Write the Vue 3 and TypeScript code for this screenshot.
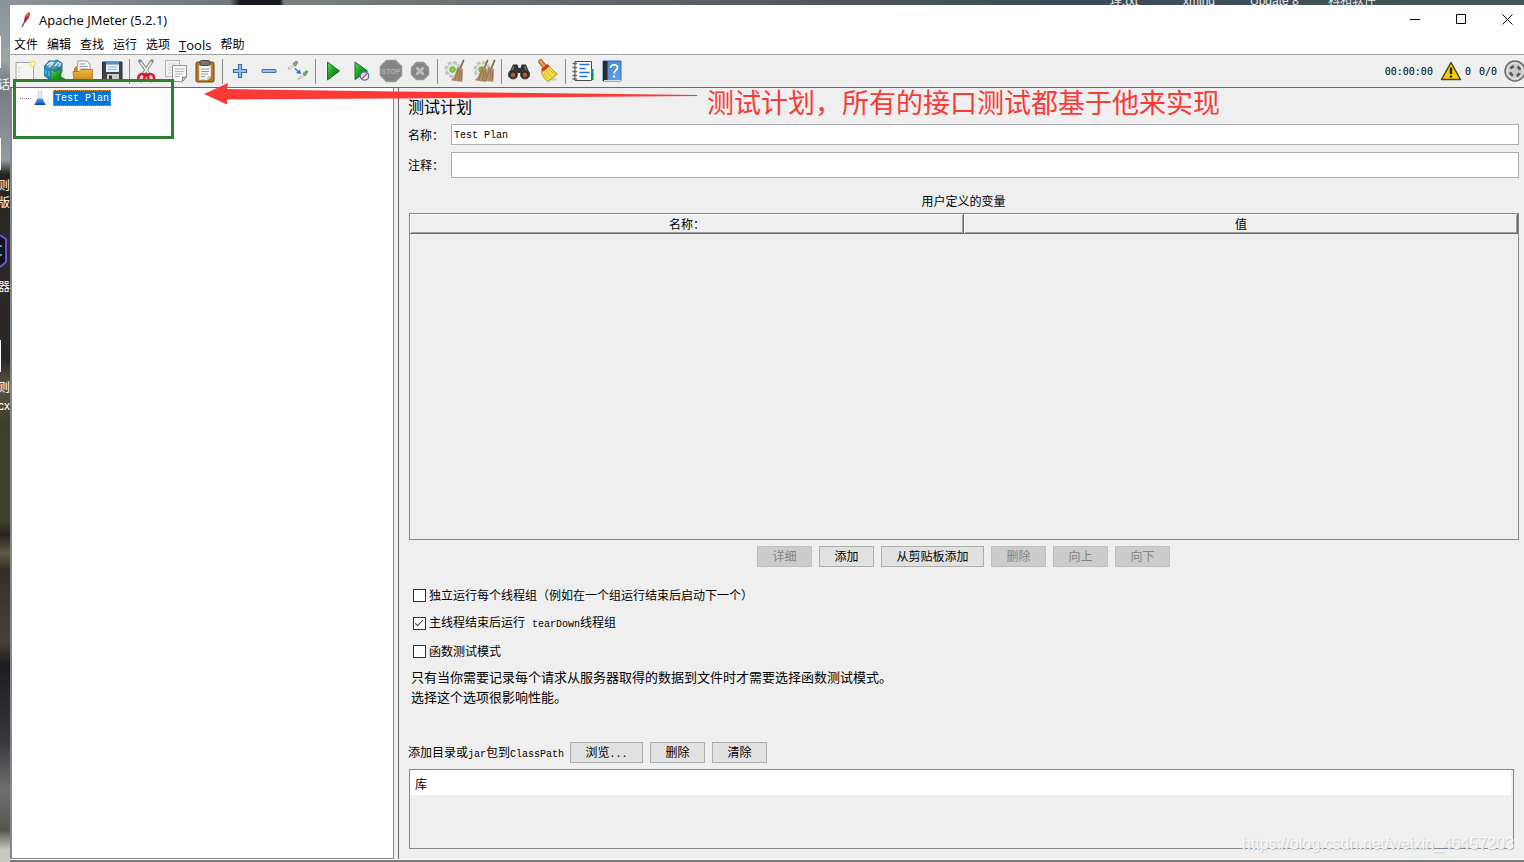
<script setup lang="ts">
import { ref } from 'vue'

interface Tool { id: string; label: string; off?: boolean }

const menus: string[] = ['文件', '编辑', '查找', '运行', '选项', 'Tools', '帮助']

const toolGroups: Tool[][] = [
  [
    { id: 'new', label: '新建' },
    { id: 'templates', label: '模板' },
    { id: 'open', label: '打开' },
    { id: 'save', label: '保存' },
  ],
  [
    { id: 'cut', label: '剪切' },
    { id: 'copy', label: '复制' },
    { id: 'paste', label: '粘贴' },
  ],
  [
    { id: 'plus', label: '展开' },
    { id: 'minus', label: '折叠' },
    { id: 'toggle', label: '切换' },
  ],
  [
    { id: 'start', label: '启动' },
    { id: 'start-now', label: '不停顿启动' },
    { id: 'stop', label: '停止', off: true },
    { id: 'shutdown', label: '关闭', off: true },
  ],
  [
    { id: 'clear', label: '清除' },
    { id: 'clear-all', label: '清除全部' },
  ],
  [
    { id: 'search', label: '查找' },
    { id: 'reset', label: '重置查找' },
  ],
  [
    { id: 'functions', label: '函数助手' },
    { id: 'help', label: '帮助' },
  ],
]

const tableButtons = [
  { text: '详细', off: true },
  { text: '添加', off: false },
  { text: '从剪贴板添加', off: false, wide: true },
  { text: '删除', off: true },
  { text: '向上', off: true },
  { text: '向下', off: true },
]

const planName = ref('Test Plan')
const comment = ref('')
const serial = ref(false)
const tearDown = ref(true)
const functional = ref(false)
</script>

<template>
  <div class="desktop">
    <svg class="defs" width="0" height="0" aria-hidden="true">
      <defs>
        <linearGradient id="gGreen" x1="0" y1="0" x2="1" y2="1">
          <stop offset="0" stop-color="#5fd75a" /><stop offset=".5" stop-color="#1c9a20" /><stop offset="1" stop-color="#0a6b10" />
        </linearGradient>
        <linearGradient id="gFolder" x1="0" y1="0" x2="0" y2="1">
          <stop offset="0" stop-color="#f0b64a" /><stop offset="1" stop-color="#c98414" />
        </linearGradient>
        <linearGradient id="gBook" x1="0" y1="0" x2="1" y2="1">
          <stop offset="0" stop-color="#4a86cf" /><stop offset="1" stop-color="#5fa0e6" />
        </linearGradient>
        <linearGradient id="gFlask" x1="0" y1="0" x2="0" y2="1">
          <stop offset="0" stop-color="#5f9be6" /><stop offset="1" stop-color="#0648b8" />
        </linearGradient>
      </defs>
      <symbol id="i-new" viewBox="0 0 24 24">
        <path d="M3 3.500h17.500v18H3z" fill="#f4f4f2" stroke="#a2a29e" />
        <path d="M5.500 9h1M5.500 13h1M5.500 17h1" stroke="#999" />
        <circle cx="19.500" cy="5" r="4" fill="#f8e97c" opacity=".6" />
        <circle cx="19.500" cy="5" r="2" fill="#fff" stroke="#eddc52" />
      </symbol>
      <symbol id="i-templates" viewBox="0 0 24 24">
        <path d="M2.500 7L7 2h6l2-1 5 3v9l-6 7-5 1-6.500-4z" fill="#4e94b5" stroke="#2f6c8c" />
        <path d="M5 6l5-3M7 8l5-5M13 7l4-4M17 8l1.500-4" fill="none" stroke="#d5edf4" stroke-width="1.500" />
        <path d="M2 8l8 3v10l-8-5z" fill="#2089bd" /><path d="M10 11l9-4v8l-9 5z" fill="#2b7ba0" />
        <path d="M4 11v4M7 12v5" stroke="#66bde0" stroke-width="1.200" />
        <path d="M9 10.500l4 2 6-2v7.500l3.500 1.500-4 1v1.500L9 22.500z" fill="url(#gGreen)" stroke="#16731a" stroke-width=".6" />
      </symbol>
      <symbol id="i-open" viewBox="0 0 24 24">
        <path d="M3 21V9l3-2h13v13z" fill="#c48320" />
        <path d="M7 2h9l3 3v8H6z" fill="#fafafa" stroke="#999" />
        <path d="M8.500 5h6M8.500 7.500h8M8.500 10h8" stroke="#999" />
        <path d="M2 12.500h6l2-2h11.500v11.500H3z" fill="url(#gFolder)" stroke="#a9700f" stroke-width=".8" />
      </symbol>
      <symbol id="i-save" viewBox="0 0 24 24">
        <path d="M2.500 3h19.500v19H3.500l-1-1z" fill="#40444a" stroke="#292c31" />
        <path d="M6 3h13v10H6z" fill="#e6eef5" /><path d="M6 3h13v2.500H6z" fill="#568cc3" />
        <path d="M8 8h9M8 10.500h9" stroke="#a8b6c4" />
        <path d="M7 15h12v7H7z" fill="#c9cdd1" /><path d="M9 16.500h3v5H9z" fill="#34383e" />
      </symbol>
      <symbol id="i-cut" viewBox="0 0 24 24">
        <path d="M5 2l8 12M17 2L9 14" stroke="#858785" stroke-width="3.500" stroke-linecap="round" />
        <path d="M5.500 3l8 11M16.500 3L9 14" stroke="#f0f0ee" stroke-width="1.500" />
        <ellipse cx="6.500" cy="18.500" rx="3" ry="3.500" fill="#f0dcdc" stroke="#d51f24" stroke-width="2.600" transform="rotate(30 6.500 18.500)" />
        <ellipse cx="16" cy="18.500" rx="3" ry="3.500" fill="#f0dcdc" stroke="#d51f24" stroke-width="2.600" transform="rotate(-30 16 18.500)" />
        <path d="M8 14.500h6.500L11.300 18z" fill="#c9191e" />
      </symbol>
      <symbol id="i-copy" viewBox="0 0 24 24">
        <path d="M1.500 1.500h14v16h-14z" fill="#f3f3f1" stroke="#b5b5b5" />
        <path d="M4 5h9M4 8h4M4 11h4M4 14h4" stroke="#cbcbcb" />
        <path d="M8.500 6.500h14V18l-4 4.500h-10z" fill="#f7f7f5" stroke="#969696" />
        <path d="M11 10h9M11 12.500h9M11 15h8M11 17.500h5" stroke="#b5b5b5" />
        <path d="M18.500 22.500V18h4z" fill="#ccc" stroke="#888" />
      </symbol>
      <symbol id="i-paste" viewBox="0 0 24 24">
        <rect x="3" y="3" width="18" height="20" rx="1.500" fill="#b97518" stroke="#74470b" />
        <path d="M6 6h12v12l-3 3H6z" fill="#f6f6f4" stroke="#a9a9a9" stroke-width=".7" />
        <path d="M8 10h8M8 12.500h8M8 15h7M8 17.500h4" stroke="#999" />
        <path d="M14.500 21v-4h3.500z" fill="#c4c4c4" />
        <rect x="7" y="1.500" width="10" height="5" rx="1.500" fill="#72756f" stroke="#484a46" />
      </symbol>
      <symbol id="i-plus" viewBox="0 0 24 24">
        <path d="M10.500 5.500h3V10.500h5v3h-5v5h-3v-5h-5v-3h5z" fill="#9cc1e9" stroke="#3b6fb4" stroke-width="1.200" />
      </symbol>
      <symbol id="i-minus" viewBox="0 0 24 24">
        <rect x="5" y="10.500" width="14" height="3" rx="1" fill="#9bbde3" stroke="#4674b2" stroke-width="1.200" />
      </symbol>
      <symbol id="i-toggle" viewBox="0 0 24 24">
        <path d="M3 9.500L8 6M13 19.500l5-3.500" stroke="#b9bbb5" stroke-width="2.600" stroke-linecap="round" />
        <path d="M3.500 9L8 6M13.500 19l4.500-3" stroke="#f2f2ee" stroke-width="1.200" />
        <path d="M7 4.500l3-2.500 2 1-1.500 3L9 7.500zM17 14.500l3.500-3 1.500 1-2 3.500-1.500 1z" fill="#76a870" stroke="#62855e" stroke-width=".6" />
        <path d="M9 9.500l4 4" stroke="#2e74cf" stroke-width="1.500" /><path d="M15 15l-5-1 4-3.500z" fill="#2e74cf" />
      </symbol>
      <symbol id="i-start" viewBox="0 0 24 24">
        <path d="M6.500 3l12 9-12 9z" fill="url(#gGreen)" stroke="#15751a" />
      </symbol>
      <symbol id="i-start-now" viewBox="0 0 24 24">
        <path d="M5 3l12.500 9L5 20.500z" fill="url(#gGreen)" stroke="#15751a" />
        <circle cx="14.500" cy="17" r="4.200" fill="#e8edf3" fill-opacity=".85" stroke="#4776b4" stroke-width="1.300" />
        <path d="M11.500 20l6-6" stroke="#c85252" stroke-width="1.500" />
      </symbol>
      <symbol id="i-stop" viewBox="0 0 24 24">
        <path d="M7.500 1.500h9l6 6v9l-6 6h-9l-6-6v-9z" fill="#848484" stroke="#949494" stroke-width="1.500" />
        <text x="12" y="14.500" text-anchor="middle" class="stop-text">STOP</text>
      </symbol>
      <symbol id="i-shutdown" viewBox="0 0 24 24">
        <path d="M8.500 3.500h7l5 5v7l-5 5h-7l-5-5v-7z" fill="#858585" stroke="#949494" stroke-width="1.500" />
        <path d="M8.500 8.500l7 7M15.500 8.500l-7 7" stroke="#bdbdbd" stroke-width="3" />
      </symbol>
      <symbol id="i-gear" viewBox="0 0 24 24">
        <circle cx="10" cy="10.500" r="7" fill="#e1e4df" stroke="#c0c4be" stroke-width="3" stroke-dasharray="3.500 2" />
        <circle cx="10" cy="10.500" r="6" fill="#e6e9e4" stroke="#c9cdc7" /><circle cx="9.500" cy="10.500" r="2.800" fill="#89d13c" stroke="#6fae3a" />
      </symbol>
      <symbol id="i-broom" viewBox="0 0 24 24">
        <path d="M20.500 1.500L17 10" stroke="#8f6843" stroke-width="1.800" stroke-linecap="round" />
        <path d="M14.500 8.500l5 1.500-.5 12.500-10.500-1.500c3.500-3 5-7 6-12.500z" fill="#b6936b" stroke="#96744e" stroke-width=".6" />
        <path d="M15.500 10l-3.500 11M17 11l-1.500 11M18.300 12v9" stroke="#8a6642" stroke-width=".7" />
      </symbol>
      <symbol id="i-clear" viewBox="0 0 24 24">
        <use href="#i-gear" width="24" height="24" /><use href="#i-broom" width="24" height="24" />
      </symbol>
      <symbol id="i-clear-all" viewBox="0 0 24 24">
        <use href="#i-gear" width="24" height="24" /><use href="#i-broom" x="-5" width="24" height="24" /><use href="#i-broom" x="2" width="24" height="24" />
      </symbol>
      <symbol id="i-search" viewBox="0 0 24 24">
        <path d="M2 14L6 5.500h4.500L11.500 9h2l1-3.500H19l3.500 8.500v4l-8 1-1-5h-3l-1 5-8-1z" fill="#30302f" />
        <path d="M6.500 7.500L5 12M18 7.500l1.500 4.500" stroke="#777" stroke-width="1.500" />
        <circle cx="6" cy="15.500" r="4.500" fill="#292929" stroke="#4b4b4b" /><circle cx="18" cy="15.500" r="4.500" fill="#292929" stroke="#4b4b4b" />
        <circle cx="6" cy="16" r="2.400" fill="#a95c2d" /><circle cx="18" cy="16" r="2.400" fill="#a95c2d" />
      </symbol>
      <symbol id="i-reset" viewBox="0 0 24 24">
        <path d="M13 21.500h9l-4-3z" fill="#c9c9c5" />
        <path d="M4.500 2.500L8 7" stroke="#9e601c" stroke-width="4.600" stroke-linecap="round" /><path d="M4.500 2.500L8 7" stroke="#dda35a" stroke-width="2.800" stroke-linecap="round" />
        <path d="M5.500 12l7.500-5.500c2 3 5 6 8.500 8.500L12 22.500C9 21 6 17 5.500 12z" fill="#f3dc45" stroke="#b89a1e" />
        <path d="M10.500 12c1.500 3 3.500 5 6 6M8 14c1.500 3 3 4.500 5 6.500M13.500 10c1.500 2.500 3.500 4 5.500 5.500" fill="none" stroke="#cdb127" stroke-width=".8" />
        <path d="M6 11.500l6.500-5.500" stroke="#d33825" stroke-width="3.200" />
      </symbol>
      <symbol id="i-functions" viewBox="0 0 24 24">
        <path d="M4 2.500h16.500v19H4z" fill="#fff" stroke="#4a4a4a" />
        <path d="M20 10h2.500v6H20z" fill="#147ed2" /><path d="M20 15h2.500v6H20z" fill="#0a9630" />
        <path d="M8.500 5.500h10M8.500 9.500h6M8.500 13.500h10M8.500 17.500h8" stroke="#1f73ee" stroke-width="1.500" />
        <path d="M1.500 4.500H6M1.500 8.500H6M1.500 12.500H6M1.500 16.500H6M1.500 20H6" stroke="#666" stroke-width="1.300" />
      </symbol>
      <symbol id="i-help" viewBox="0 0 24 24">
        <path d="M3 2h18v20H3z" fill="url(#gBook)" stroke="#386ca8" /><path d="M3 2h4.500v20H3z" fill="#262b33" />
        <path d="M4 21.500h17" stroke="#d5e0ec" />
        <path d="M10.500 9c0-4 7-4.500 7-.5 0 2.700-3.500 3-3.500 6" fill="none" stroke="#fff" stroke-width="1.700" /><circle cx="14" cy="17.500" r="1.200" fill="#fff" />
      </symbol>
    </svg>

    <div class="wallpaper-top">
      <span class="d1">理.txt</span><span class="d2">xming</span><span class="d3">Update 8</span><span class="d4">科和软件</span>
    </div>
    <div class="wallpaper-left">
      <span class="w1">话</span><span class="w2">则</span><span class="w3">版</span><span class="w4">器</span><span class="w5">则</span><span class="w6">cx</span>
      <i class="doc p1"></i><i class="doc p2"></i><i class="doc p3"></i>
      <svg class="hex" viewBox="0 0 8 36" width="8" height="36">
        <path d="M0 2l6 4v23l-6 5" fill="#12131d" stroke="#6b55d6" stroke-width="2" /><path d="M0 13h2M0 22h2" stroke="#26b3c3" stroke-width="2" />
      </svg>
    </div>

    <main class="window">
      <header class="titlebar">
        <svg viewBox="0 0 14 18" width="14" height="18">
          <path d="M11 1c2 1 1 4-1 7l-3 4c-2-3 0-9 4-11z" fill="#d02a3c" /><path d="M11 1c1 1 0 3-1 4l-2 1c0-2 1-4 3-5z" fill="#e8742c" />
          <path d="M9 6L4 16" stroke="#7c2a6c" stroke-width="1.200" />
        </svg>
        <h1>Apache JMeter (5.2.1)</h1>
        <div class="controls">
          <button type="button" aria-label="最小化"><svg viewBox="0 0 11 11" width="11" height="11"><path d="M0 5.500h10" /></svg></button>
          <button type="button" aria-label="最大化"><svg viewBox="0 0 11 11" width="11" height="11"><path d="M.5.500h9v9H.5z" /></svg></button>
          <button type="button" aria-label="关闭"><svg viewBox="0 0 11 11" width="11" height="11"><path d="M.5.500l10 10M10.500.500l-10 10" /></svg></button>
        </div>
      </header>

      <nav class="menubar">
        <button v-for="m in menus" :key="m" type="button" :class="{ latin: m === 'Tools' }">
          <template v-if="m === 'Tools'"><u>T</u>ools</template>
          <template v-else>{{ m }}</template>
        </button>
      </nav>

      <div class="toolbar">
        <div v-for="(group, i) in toolGroups" :key="i" class="group">
          <button v-for="t in group" :key="t.id" type="button" :disabled="t.off" :aria-label="t.label">
            <svg width="24" height="24"><use :href="'#i-' + t.id" /></svg>
          </button>
        </div>
        <div class="status">
          <span>00:00:00</span>
          <svg class="warn" viewBox="0 0 22 20" width="22" height="20">
            <path d="M11 1.500l9.500 17h-19z" fill="#f5cd0c" stroke="#4c4310" stroke-width="1.500" stroke-linejoin="round" />
            <path d="M11 6.500v6.500" stroke="#222" stroke-width="2.400" /><path d="M11 14.500v2" stroke="#222" stroke-width="2.400" />
          </svg>
          <span>0</span>
          <span class="threads">0/0</span>
          <svg viewBox="0 0 22 22" width="22" height="22">
            <circle cx="11" cy="11" r="10" fill="#c9c9c9" stroke="#6b6b6b" stroke-width="1.500" />
            <circle cx="11" cy="11" r="8" fill="none" stroke="#e6e6e6" />
            <circle cx="11" cy="11" r="5" fill="none" stroke="#555" stroke-width="2.600" stroke-dasharray="4 3.850" stroke-dashoffset="-2" />
          </svg>
        </div>
      </div>

      <div class="body">
        <aside class="tree">
          <div class="node">
            <span class="branch"></span>
            <svg viewBox="0 0 14 16" width="14" height="16">
              <path d="M5.500 1.500h3v5l4 8H1.500l4-8z" fill="#e6edf5" stroke="#c2ccd8" stroke-width=".8" />
              <path d="M4.500 8.500h5l3 6.500H1.500z" fill="url(#gFlask)" />
            </svg>
            <button type="button" class="lat">Test Plan</button>
          </div>
        </aside>

        <section class="panel">
          <h2>测试计划</h2>
          <div class="field">
            <label for="name">名称：</label>
            <input id="name" v-model="planName" class="lat" type="text" />
          </div>
          <div class="field tall">
            <label for="comment">注释：</label>
            <input id="comment" v-model="comment" class="lat" type="text" />
          </div>

          <h3>用户定义的变量</h3>
          <div class="vars">
            <table>
              <thead><tr><th scope="col">名称：</th><th scope="col">值</th></tr></thead>
            </table>
          </div>
          <div class="actions">
            <button v-for="b in tableButtons" :key="b.text" type="button" class="btn" :class="{ wide: b.wide }" :disabled="b.off">{{ b.text }}</button>
          </div>

          <div class="checks">
            <label><input v-model="serial" type="checkbox" /><span>独立运行每个线程组（例如在一个组运行结束后启动下一个）</span></label>
            <label><input v-model="tearDown" type="checkbox" /><span>主线程结束后运行<span class="lat gap">tearDown</span>线程组</span></label>
            <label><input v-model="functional" type="checkbox" /><span>函数测试模式</span></label>
          </div>
          <p class="note">只有当你需要记录每个请求从服务器取得的数据到文件时才需要选择函数测试模式。<br />选择这个选项很影响性能。</p>

          <div class="classpath">
            <span class="caption">添加目录或<span class="lat">jar</span>包到<span class="lat">ClassPath</span></span>
            <button type="button" class="btn browse">浏览<span class="lat">...</span></button>
            <button type="button" class="btn">删除</button>
            <button type="button" class="btn">清除</button>
          </div>
          <div class="libs">
            <table><thead><tr><th scope="col">库</th></tr></thead></table>
          </div>
        </section>
      </div>
    </main>

    <div class="mark-box"></div>
    <svg class="mark-arrow" viewBox="0 0 494 22" width="494" height="22" aria-hidden="true">
      <path d="M0 11L24 0l-1 6 170 2.500 180 2 120 1.500v1l-120 1-180 1.500-170 1v5z" fill="#fb3a37" />
    </svg>
    <div class="mark-text">测试计划，所有的接口测试都基于他来实现</div>
    <div class="watermark">https://blog.csdn.net/weixin_46457203</div>
  </div>
</template>

<style>
body { overflow: hidden; }
</style>

<style scoped>
.desktop {
  position: relative;
  box-sizing: border-box;
  height: 100vh;
  padding: 5px 0 2px 10px;
  overflow: hidden;
  background: #777a7a;
  color: #000;
  font: 12px/16px "Liberation Sans", "Noto Sans CJK SC", sans-serif;
}
.defs { position: absolute; }
.stop-text { font: bold 7px "Liberation Sans", sans-serif; fill: #b0b0b0; }
button { padding: 0; border: 0; background: none; color: inherit; font: inherit; }
h1, h2, h3, p { margin: 0; font-weight: 400; }
.lat { font-family: "Liberation Mono", monospace; font-size: 10px; }

.wallpaper-top {
  position: absolute;
  inset: 0 0 auto;
  height: 5px;
  overflow: hidden;
  background: linear-gradient(90deg, #8b959b 0, #6c757a 230px, #15191f 240px, #15191f 280px, #79817f 284px, #5c666a 40%, #3b4a55 70%, #46545d 100%);
}
.wallpaper-top span { position: absolute; bottom: -3px; color: #e8e8e8; line-height: 14px; white-space: nowrap; }
.d1 { left: 1110px; }
.d2 { left: 1183px; }
.d3 { left: 1250px; }
.d4 { left: 1328px; }

.wallpaper-left {
  position: absolute;
  inset: 0 auto 0 0;
  width: 10px;
  overflow: hidden;
  background: linear-gradient(#8a9398 0, #9aa3a6 60px, #717b80 85px, #929ca0 160px, #23241f 174px, #2e2927 240px, #292524 360px, #5a5447 385px, #3d3f2c 420px, #42432f 520px, #26231f 535px, #605a43 553px, #332f28 570px, #47423a 640px, #1d1c20 665px, #37363a 740px, #6f6f6d 790px, #55544f 830px, #c9c9c2 850px);
}
.wallpaper-left span { position: absolute; right: 0; color: #fff; line-height: 14px; white-space: nowrap; }
.w1 { top: 78px; }
.w2 { top: 179px; }
.w3 { top: 196px; }
.w4 { top: 280px; }
.w5 { top: 381px; }
.w6 { top: 399px; }
.doc { position: absolute; left: 0; width: 1px; height: 32px; background: #fff; }
.p1 { top: 36px; }
.p2 { top: 138px; }
.p3 { top: 340px; }
.hex { position: absolute; left: 0; top: 233px; }

.window { display: flex; flex-direction: column; height: 100%; overflow: hidden; background: #fff; }
.titlebar { display: flex; align-items: center; height: 29px; padding-left: 8px; }
.titlebar h1 { margin-left: 7px; font: 13px/16px "Open Sans", sans-serif; }
.controls { display: flex; align-self: stretch; margin: 0 -6px 0 auto; }
.controls button { display: grid; place-items: center; width: 46px; }
.controls path { fill: none; stroke: #000; }

.menubar { display: flex; gap: 9px; height: 18px; padding: 2px 0 0 4px; border-bottom: 1px solid #a0a0a0; font-family: "Open Sans", "Noto Sans CJK SC", sans-serif; }
.menubar .latin { font-size: 13px; }

.toolbar { display: flex; height: 32px; background: #efefef; border-bottom: 1px solid #696969; }
.group { display: flex; align-items: center; }
.group + .group::before { content: ""; width: 1px; height: 25px; margin: 0 2px 0 3px; background: #8c8c8c; }
.group button { display: grid; place-items: center; width: 29px; height: 29px; }
.status { display: flex; align-items: center; margin: 0 -2px 0 auto; font: 10px/16px "DejaVu Sans Mono", monospace; }
.status span { padding-top: 1px; }
.warn { margin: 0 3px 0 7px; }
.status .threads { margin: 0 7px 0 8px; }

.body { display: flex; flex: 1; min-height: 0; gap: 4px; background: #efefef; border-bottom: 1px solid #fff; }
.tree { box-sizing: border-box; flex: none; width: 384px; background: #fff; border: solid #828790; border-width: 0 1px 1px 2px; }
.node { display: flex; align-items: center; height: 20px; padding-left: 8px; }
.branch { width: 11px; margin-right: 2px; border-top: 1px dotted #808080; }
.node button { box-sizing: border-box; height: 16px; margin-left: 6px; padding: 1px 0 0 1px; width: 58px; border: 1px dotted #e8983b; background: #0078d7; color: #fff; line-height: 14px; text-align: left; }

.panel { box-sizing: border-box; display: flex; flex: 1; flex-direction: column; min-width: 0; padding: 7px 5px 10px 9px; border-left: 1px solid #696969; }
.panel h2 { font-size: 16px; line-height: 26px; }
.field { display: flex; align-items: center; height: 21px; margin-top: 3px; }
.field.tall { height: 26px; margin-top: 7px; }
.field label { width: 43px; padding-top: 2px; white-space: nowrap; }
.field input { box-sizing: border-box; flex: 1; min-width: 0; height: 100%; padding: 1px 2px 0; border: 1px solid #abadb3; border-radius: 0; outline: 0; background: #fff; color: #000; }
.panel h3 { margin-top: 13px; font-size: 12px; line-height: 22px; text-align: center; }
.vars { flex: 1; margin: 0 0 0 1px; border: 1px solid #828790; }
table { width: 100%; border-collapse: separate; border-spacing: 0; table-layout: fixed; }
th { box-sizing: border-box; padding: 0; font-weight: 400; }
.vars th { height: 20px; padding-top: 2px; line-height: 18px; box-shadow: inset -1px -1px #696969, inset 1px 1px #fff, inset -2px -2px #a0a0a0; }
.actions { display: flex; justify-content: center; gap: 7px; margin-top: 6px; }
.btn { box-sizing: border-box; width: 55px; height: 21px; padding-top: 2px; border: 1px solid #adadad; background: #e1e1e1; line-height: 17px; }
.btn.wide { width: 103px; }
.btn.browse { width: 73px; margin-left: -1px; }
.btn:disabled { border-color: #bfbfbf; background: #ccc; color: #838383; }
.checks { margin-top: 14px; }
.checks label { display: flex; align-items: center; width: max-content; height: 28px; padding-left: 5px; }
.checks label > span { padding-top: 2px; }
.checks input { appearance: none; position: relative; box-sizing: border-box; width: 13px; height: 13px; margin: 0 3px 0 0; border: 1px solid #333; background: #fff; }
.checks input:checked::after { content: ""; position: absolute; left: 3px; top: 0; width: 3px; height: 7px; border: solid #333; border-width: 0 1px 1px 0; transform: rotate(42deg); }
.gap { margin-left: 7px; }
.note { margin: 3px 0 0 3px; font-size: 13px; line-height: 20px; }
.classpath { display: flex; align-items: center; gap: 7px; margin-top: 34px; }
.caption { padding-top: 2px; }
.libs { box-sizing: border-box; height: 80px; margin: 6px 5px 0 1px; padding-right: 2px; border: 1px solid #828790; }
.libs th { height: 25px; padding: 4px 5px 0; background: #fff; text-align: left; }

.mark-box { position: absolute; left: 13px; top: 79px; box-sizing: border-box; width: 161px; height: 60px; border: 3px solid #2f8033; }
.mark-arrow { position: absolute; left: 204px; top: 83px; }
.mark-text { position: absolute; left: 707px; top: 85px; color: #fb3a37; font: 27px/34px "Noto Sans CJK SC", sans-serif; white-space: nowrap; }
.watermark { position: absolute; right: 10px; bottom: 8px; color: #f8f8f8; font: 16px/20px "Liberation Sans", sans-serif; text-shadow: 1px 1px 1px #c4c4c4; }
</style>
